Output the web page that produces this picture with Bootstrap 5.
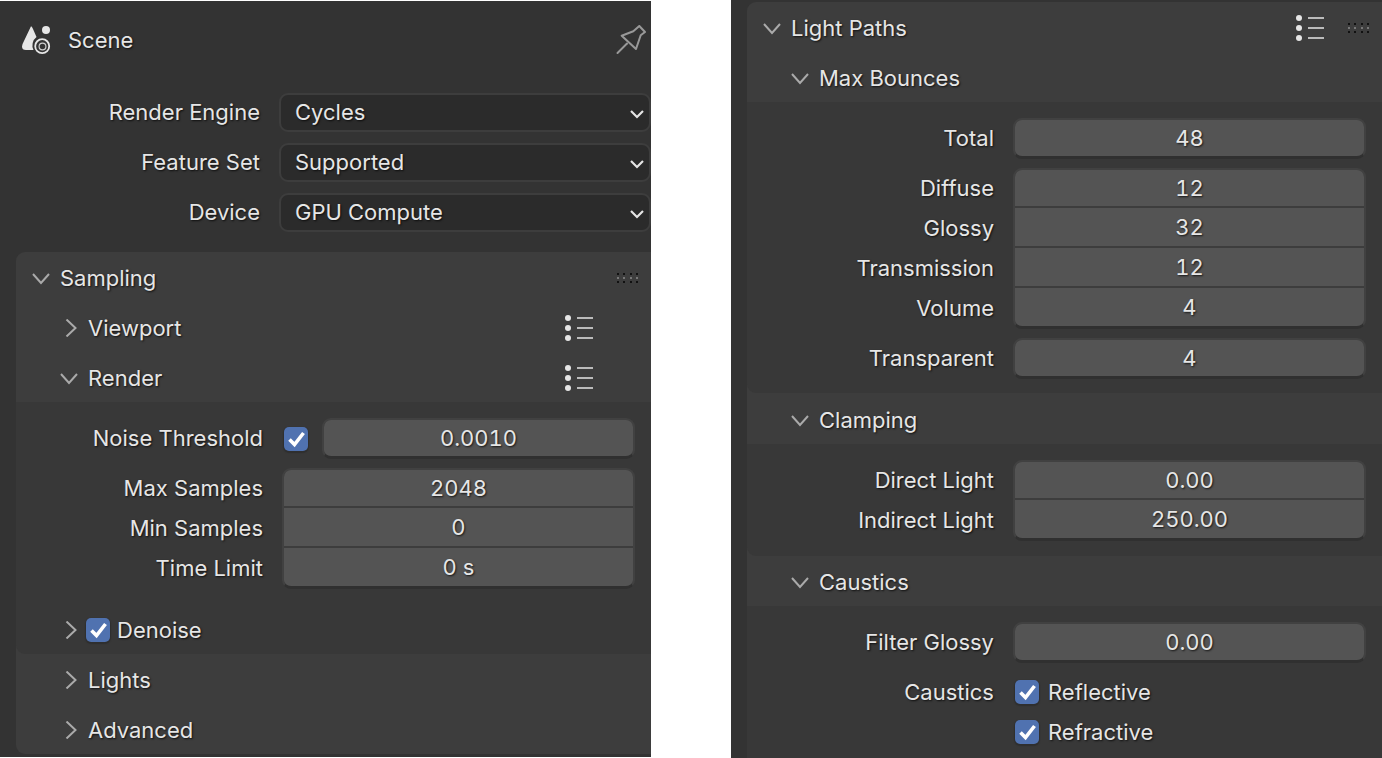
<!DOCTYPE html>
<html lang="en">
<head>
  <meta charset="UTF-8" />
  <title>Render properties</title>
  <link href="https://cdn.jsdelivr.net/npm/bootstrap@5.3.2/dist/css/bootstrap.min.css" rel="stylesheet" />
  <style>
    body {
      background: #fff;
      height: 758px;
      overflow: hidden;
      font-family: Inter, "Liberation Sans", sans-serif;
      font-size: 22px;
      color: #e6e6e6;
    }

    .editor-win {
      width: 651px;
      background: #333;
      overflow: hidden;
    }
    .win-left { height: 756px; margin-top: 1px; margin-right: 80px; }
    .win-right { height: 758px; padding-top: 2px; }

    .shaded { text-shadow: 1px 1px 2px rgba(0, 0, 0, .75); white-space: nowrap; }

    .scene-head { height: 78px; margin-bottom: 8px; padding: 0 5px 0 22px; }
    .scene-head span { margin-left: 17px; }

    /* top level rows: label + dropdown */
    .top-row { height: 50px; }
    .top-label { width: 260px; text-align: right; }
    .drop-field {
      width: 372px;
      height: 39px;
      margin-left: 19px;
      padding: 0 5px 0 14px;
      background: #2b2b2b;
      border: 2px solid #3d3d3d;
      border-radius: 9px;
    }

    /* panels */
    .panel-box {
      background: #3d3d3d;
      margin-left: 16px;
      border-radius: 9px 0 0 9px;
    }
    .panel-left { margin-top: 15px; height: 502px; }
    .panel-right { height: 760px; border-bottom-left-radius: 0; }
    .head-row { height: 50px; padding-top: 2px; }
    .head-tall { height: 51px; padding-top: 3px; }
    .head-main { padding-left: 16px; }
    .head-sub { padding-left: 44px; }
    .head-row .twist { width: 18px; margin-right: 10px; flex: none; }
    .head-row .head-end { margin-left: auto; }
    .list-ico { margin-right: 58px; }
    .list-ico-main { margin-left: auto; margin-right: 24px; }
    .grip-ico { margin-right: 12px; }

    .sub-body {
      background: #383838;
      border-radius: 0 0 0 9px;
      padding: 16px 16px 0 0;
    }
    .body-bounces { padding-bottom: 14px; }
    .body-clamp { padding-bottom: 15px; }
    .body-last { padding-bottom: 20px; border-radius: 0; }

    .prop-row { height: 40px; }
    .prop-label { width: 247px; text-align: right; flex: none; }
    .num-col { margin-left: 19px; flex: 1; }

    /* numeric fields; groups share their borders */
    .num-group {
      border: 2px solid #414141;
      border-bottom: 3px solid #303030;
      border-radius: 9px;
      overflow: hidden;
    }
    .num-cell {
      height: 36px;
      background: #545454;
      text-align: center;
      line-height: 36px;
      font-variant-numeric: tabular-nums;
    }
    .num-cell + .num-cell { border-top: 2px solid #3d3d3d; height: 40px; line-height: 38px; }
    .prop-gap { margin-top: 9px; }

    .check-box {
      width: 24px;
      height: 24px;
      flex: none;
      background: #5072b0;
      border-radius: 5px;
      box-shadow: 0 1px 1px 1px #2f2f2f;
    }
    .check-box svg { display: block; }
    .check-noise { margin: 0 14px 0 21px; }
    .check-side { margin-left: 21px; }
    .check-text { margin-left: 9px; }

    .denoise-row { height: 48px; margin-top: 17px; padding-top: 0; }
    .head-row .twist-denoise { margin-right: 8px; }
    .denoise-row span { margin-left: 7px; }
    .check-row { height: 40px; }
    .check-first { margin-top: 9px; }
  </style>
</head>
<body class="d-flex align-items-start">

  <!-- left editor -->
  <div class="editor-win win-left">
    <div class="scene-head d-flex align-items-center">
      <svg width="29" height="30" viewBox="0 -1 29 30">
        <path d="M9 .3 Q10 .3 11 3 L14.5 11 A10.5 10.5 0 0 0 11.5 24 L4 24 Q0 24 0 20.5 Q0 18.5 1.5 16 Z" fill="#e6e6e6"/>
        <circle cx="24" cy="4" r="4" fill="#e6e6e6"/>
        <circle cx="20.2" cy="20.2" r="7" fill="none" stroke="#e6e6e6" stroke-width="1.8"/>
        <circle cx="20.5" cy="20.5" r="3.4" fill="none" stroke="#ccc" stroke-width="1.2"/>
      </svg>
      <span class="shaded">Scene</span>
      <svg class="ms-auto" width="30" height="30" viewBox="0 0 30 30" fill="none" stroke="#999" stroke-width="2" stroke-linejoin="round" stroke-linecap="round">
        <path d="M1.5 28 L11 18.5"/>
        <path d="M17.3 6.3 L23.3 1 L29 7 L24.7 10.3 L20 24 L5.7 10.7 Z"/>
      </svg>
    </div>

    <div class="top-row d-flex align-items-center">
      <div class="top-label shaded">Render Engine</div>
      <div class="drop-field d-flex align-items-center justify-content-between">
        <span class="shaded">Cycles</span>
        <svg width="14" height="14" viewBox="0 0 14 14" fill="none" stroke="#e6e6e6" stroke-width="2.2"><path d="M1 6 L7 12 L13 6"/></svg>
      </div>
    </div>
    <div class="top-row d-flex align-items-center">
      <div class="top-label shaded">Feature Set</div>
      <div class="drop-field d-flex align-items-center justify-content-between">
        <span class="shaded">Supported</span>
        <svg width="14" height="14" viewBox="0 0 14 14" fill="none" stroke="#e6e6e6" stroke-width="2.2"><path d="M1 6 L7 12 L13 6"/></svg>
      </div>
    </div>
    <div class="top-row d-flex align-items-center">
      <div class="top-label shaded">Device</div>
      <div class="drop-field d-flex align-items-center justify-content-between">
        <span class="shaded">GPU Compute</span>
        <svg width="14" height="14" viewBox="0 0 14 14" fill="none" stroke="#e6e6e6" stroke-width="2.2"><path d="M1 6 L7 12 L13 6"/></svg>
      </div>
    </div>

    <div class="panel-box panel-left">
      <div class="head-row head-main d-flex align-items-center">
        <svg class="twist" width="18" height="18" viewBox="0 0 18 18" fill="none" stroke="#aaa" stroke-width="2"><path d="M1 5 L9 14 L17 5"/></svg>
        <span class="shaded">Sampling</span>
        <svg class="head-end grip-ico" width="22" height="12" viewBox="0 -1 22 12"><g fill="#111"><path d="M0 0h2v2h-2z M6 0h2v2h-2z M13 0h2v2h-2z M19 0h2v2h-2z M0 8h2v2h-2z M6 8h2v2h-2z M13 8h2v2h-2z M19 8h2v2h-2z"/></g><g fill="#777"><path d="M0 4h2v2h-2z M6 4h2v2h-2z M13 4h2v2h-2z M19 4h2v2h-2z"/></g></svg>
      </div>
      <div class="head-row head-sub d-flex align-items-center">
        <svg class="twist" width="18" height="18" viewBox="0 0 18 18" fill="none" stroke="#aaa" stroke-width="2"><path d="M6.5 .5 L15.5 9 L6.5 17.5"/></svg>
        <span class="shaded">Viewport</span>
        <svg class="head-end list-ico" width="28" height="30" viewBox="0 0 28 30"><g fill="#e6e6e6"><circle cx="3" cy="5" r="3"/><circle cx="3" cy="15" r="3"/><circle cx="3" cy="25" r="3"/></g><g stroke="#bbb" stroke-width="2"><path d="M12 5 H28 M12 15 H28 M12 25 H28"/></g></svg>
      </div>
      <div class="head-row head-sub d-flex align-items-center">
        <svg class="twist" width="18" height="18" viewBox="0 0 18 18" fill="none" stroke="#aaa" stroke-width="2"><path d="M1 5 L9 14 L17 5"/></svg>
        <span class="shaded">Render</span>
        <svg class="head-end list-ico" width="28" height="30" viewBox="0 0 28 30"><g fill="#e6e6e6"><circle cx="3" cy="5" r="3"/><circle cx="3" cy="15" r="3"/><circle cx="3" cy="25" r="3"/></g><g stroke="#bbb" stroke-width="2"><path d="M12 5 H28 M12 15 H28 M12 25 H28"/></g></svg>
      </div>
      <div class="sub-body">
        <div class="d-flex align-items-center">
          <div class="prop-label shaded">Noise Threshold</div>
          <div class="check-box check-noise">
            <svg width="24" height="24" viewBox="0 0 24 24" fill="none" stroke="#fff" stroke-width="3.6"><path d="M5.5 12.5 L10.5 17.5 L19.5 6"/></svg>
          </div>
          <div class="flex-grow-1 num-group"><div class="num-cell shaded">0.0010</div></div>
        </div>
        <div class="d-flex prop-gap">
          <div>
            <div class="prop-row prop-label shaded d-flex align-items-center justify-content-end">Max Samples</div>
            <div class="prop-row prop-label shaded d-flex align-items-center justify-content-end">Min Samples</div>
            <div class="prop-row prop-label shaded d-flex align-items-center justify-content-end">Time Limit</div>
          </div>
          <div class="num-col num-group">
            <div class="num-cell shaded">2048</div>
            <div class="num-cell shaded">0</div>
            <div class="num-cell shaded">0 s</div>
          </div>
        </div>
        <div class="head-row head-sub d-flex align-items-center denoise-row">
          <svg class="twist twist-denoise" width="18" height="18" viewBox="0 0 18 18" fill="none" stroke="#aaa" stroke-width="2"><path d="M6.5 .5 L15.5 9 L6.5 17.5"/></svg>
          <div class="check-box">
            <svg width="24" height="24" viewBox="0 0 24 24" fill="none" stroke="#fff" stroke-width="3.6"><path d="M5.5 12.5 L10.5 17.5 L19.5 6"/></svg>
          </div>
          <span class="shaded">Denoise</span>
        </div>
      </div>
      <div class="head-row head-sub d-flex align-items-center">
        <svg class="twist" width="18" height="18" viewBox="0 0 18 18" fill="none" stroke="#aaa" stroke-width="2"><path d="M6.5 .5 L15.5 9 L6.5 17.5"/></svg>
        <span class="shaded">Lights</span>
      </div>
      <div class="head-row head-sub d-flex align-items-center">
        <svg class="twist" width="18" height="18" viewBox="0 0 18 18" fill="none" stroke="#aaa" stroke-width="2"><path d="M6.5 .5 L15.5 9 L6.5 17.5"/></svg>
        <span class="shaded">Advanced</span>
      </div>
    </div>
  </div>

  <!-- right editor -->
  <div class="editor-win win-right">
    <div class="panel-box panel-right">
      <div class="head-row head-main d-flex align-items-center">
        <svg class="twist" width="18" height="18" viewBox="0 0 18 18" fill="none" stroke="#aaa" stroke-width="2"><path d="M1 5 L9 14 L17 5"/></svg>
        <span class="shaded">Light Paths</span>
        <svg class="list-ico-main" width="28" height="30" viewBox="0 0 28 30"><g fill="#e6e6e6"><circle cx="3" cy="5" r="3"/><circle cx="3" cy="15" r="3"/><circle cx="3" cy="25" r="3"/></g><g stroke="#bbb" stroke-width="2"><path d="M12 5 H28 M12 15 H28 M12 25 H28"/></g></svg>
        <svg class="grip-ico" width="22" height="12" viewBox="0 -1 22 12"><g fill="#111"><path d="M0 0h2v2h-2z M6 0h2v2h-2z M13 0h2v2h-2z M19 0h2v2h-2z M0 8h2v2h-2z M6 8h2v2h-2z M13 8h2v2h-2z M19 8h2v2h-2z"/></g><g fill="#777"><path d="M0 4h2v2h-2z M6 4h2v2h-2z M13 4h2v2h-2z M19 4h2v2h-2z"/></g></svg>
      </div>
      <div class="head-row head-sub d-flex align-items-center">
        <svg class="twist" width="18" height="18" viewBox="0 0 18 18" fill="none" stroke="#aaa" stroke-width="2"><path d="M1 5 L9 14 L17 5"/></svg>
        <span class="shaded">Max Bounces</span>
      </div>
      <div class="sub-body body-bounces">
        <div class="d-flex align-items-center">
          <div class="prop-label shaded">Total</div>
          <div class="num-col num-group"><div class="num-cell shaded">48</div></div>
        </div>
        <div class="d-flex prop-gap">
          <div>
            <div class="prop-row prop-label shaded d-flex align-items-center justify-content-end">Diffuse</div>
            <div class="prop-row prop-label shaded d-flex align-items-center justify-content-end">Glossy</div>
            <div class="prop-row prop-label shaded d-flex align-items-center justify-content-end">Transmission</div>
            <div class="prop-row prop-label shaded d-flex align-items-center justify-content-end">Volume</div>
          </div>
          <div class="num-col num-group">
            <div class="num-cell shaded">12</div>
            <div class="num-cell shaded">32</div>
            <div class="num-cell shaded">12</div>
            <div class="num-cell shaded">4</div>
          </div>
        </div>
        <div class="d-flex align-items-center prop-gap">
          <div class="prop-label shaded">Transparent</div>
          <div class="num-col num-group"><div class="num-cell shaded">4</div></div>
        </div>
      </div>
      <div class="head-row head-tall head-sub d-flex align-items-center">
        <svg class="twist" width="18" height="18" viewBox="0 0 18 18" fill="none" stroke="#aaa" stroke-width="2"><path d="M1 5 L9 14 L17 5"/></svg>
        <span class="shaded">Clamping</span>
      </div>
      <div class="sub-body body-clamp">
        <div class="d-flex">
          <div>
            <div class="prop-row prop-label shaded d-flex align-items-center justify-content-end">Direct Light</div>
            <div class="prop-row prop-label shaded d-flex align-items-center justify-content-end">Indirect Light</div>
          </div>
          <div class="num-col num-group">
            <div class="num-cell shaded">0.00</div>
            <div class="num-cell shaded">250.00</div>
          </div>
        </div>
      </div>
      <div class="head-row head-sub d-flex align-items-center">
        <svg class="twist" width="18" height="18" viewBox="0 0 18 18" fill="none" stroke="#aaa" stroke-width="2"><path d="M1 5 L9 14 L17 5"/></svg>
        <span class="shaded">Caustics</span>
      </div>
      <div class="sub-body body-last">
        <div class="d-flex align-items-center">
          <div class="prop-label shaded">Filter Glossy</div>
          <div class="num-col num-group"><div class="num-cell shaded">0.00</div></div>
        </div>
        <div class="d-flex align-items-center check-row check-first">
          <div class="prop-label shaded">Caustics</div>
          <div class="check-box check-side">
            <svg width="24" height="24" viewBox="0 0 24 24" fill="none" stroke="#fff" stroke-width="3.6"><path d="M5.5 12.5 L10.5 17.5 L19.5 6"/></svg>
          </div>
          <span class="shaded check-text">Reflective</span>
        </div>
        <div class="d-flex align-items-center check-row">
          <div class="prop-label"></div>
          <div class="check-box check-side">
            <svg width="24" height="24" viewBox="0 0 24 24" fill="none" stroke="#fff" stroke-width="3.6"><path d="M5.5 12.5 L10.5 17.5 L19.5 6"/></svg>
          </div>
          <span class="shaded check-text">Refractive</span>
        </div>
      </div>
    </div>
  </div>

  <script src="https://cdn.jsdelivr.net/npm/bootstrap@5.3.2/dist/js/bootstrap.bundle.min.js"></script>
</body>
</html>
